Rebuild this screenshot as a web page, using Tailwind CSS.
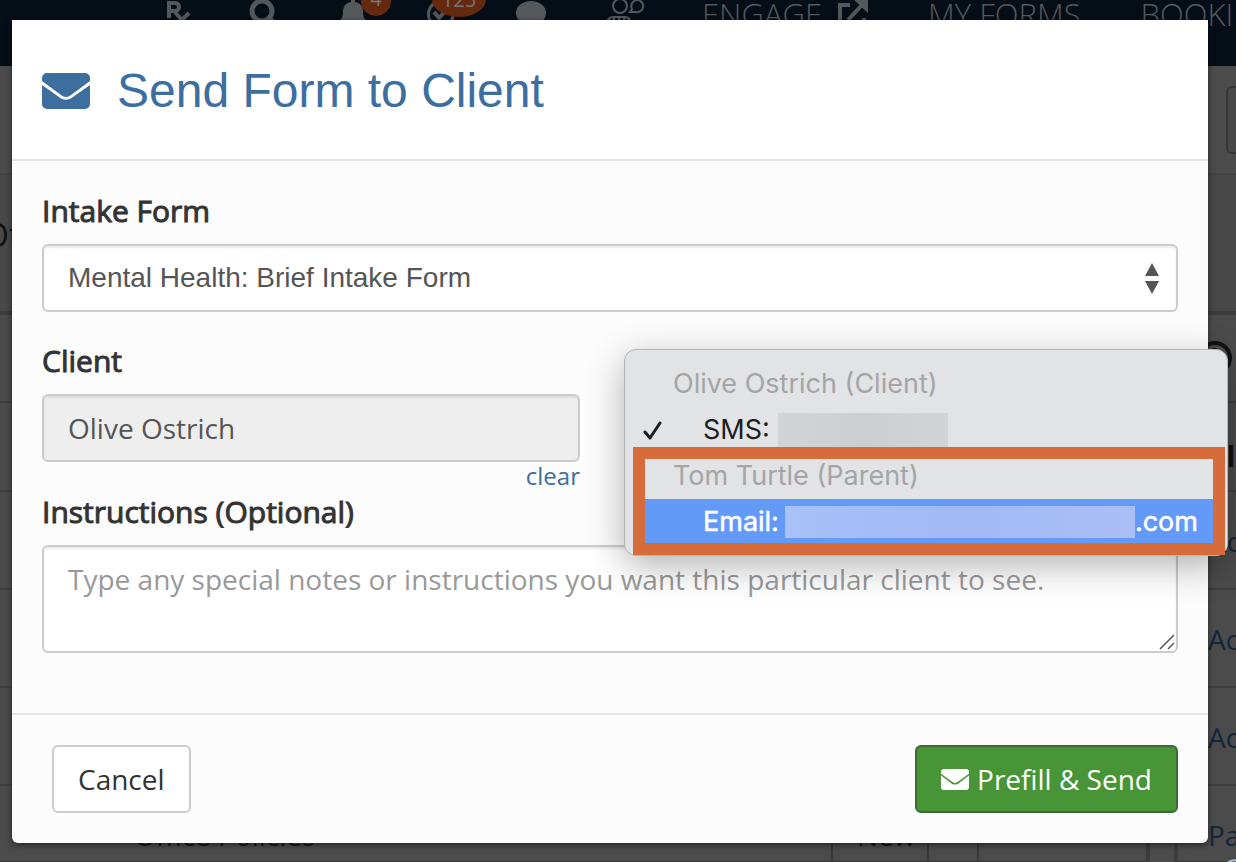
<!DOCTYPE html>
<html lang="en">
<head>
  <meta charset="UTF-8">
  <title>Send Form to Client</title>
  <script src="https://cdn.jsdelivr.net/npm/@tailwindcss/browser@4"></script>
</head>
<body class="relative h-screen overflow-hidden bg-[#4b4b4b] font-['Open_Sans',sans-serif] text-[28px]">

  <!-- dimmed page behind the dialog -->
  <div aria-hidden="true">
    <nav class="flex h-[66px] items-start overflow-hidden bg-[#050e17] pl-[166px] text-[31px] leading-7 font-light whitespace-nowrap text-[#55585b]">
      <svg class="h-7 w-6 shrink-0" viewBox="0 0 24 28" fill="none" stroke="currentColor" stroke-width="4"><path d="M3 18V3h6a4 4 0 0 1 0 8H3M8 11l13 15M23 13L10 26"/></svg>
      <svg class="ml-[59px] h-7 w-8 shrink-0" viewBox="0 0 32 28" fill="none" stroke="currentColor" stroke-width="5"><circle cx="13" cy="11" r="10"/><path d="M20 18l8 8"/></svg>
      <div class="relative ml-[58px] shrink-0">
        <svg class="h-7 w-8" viewBox="0 0 32 28" fill="currentColor"><path d="M12 0h4v2c6 1 8 5 8 10 0 4 1 6 3 9H1c2-3 3-5 3-9 0-5 2-9 8-10z"/></svg>
        <span class="absolute -top-[14px] left-[22px] flex size-[30px] items-center justify-center rounded-full bg-[#652910] pb-1 text-xl font-normal text-[#777]">4</span>
      </div>
      <div class="relative ml-[54px] shrink-0">
        <svg class="h-7 w-8" viewBox="0 0 32 28" fill="none" stroke="currentColor" stroke-width="3"><path d="M10 3a13 13 0 0 0-4 19M28 16a13 13 0 0 1-4 8"/><path d="M9 12l5 6 9-10" stroke-width="4"/></svg>
        <span class="absolute -top-[18px] left-[7px] flex h-[35px] w-[54px] items-center justify-center rounded-[50%] bg-[#652910] text-xl font-normal text-[#777]">125</span>
      </div>
      <svg class="ml-[59px] h-7 w-8 shrink-0" viewBox="0 0 32 28" fill="currentColor"><ellipse cx="15" cy="13" rx="15" ry="12"/></svg>
      <svg class="ml-[58px] h-7 w-10 shrink-0" viewBox="0 0 40 28" fill="none" stroke="currentColor" stroke-width="2"><circle cx="14" cy="6" r="7"/><path d="M24 12l2-3a6 6 0 1 1 4 3zM1 24c0-5 3-7 7-7h10c4 0 7 2 7 7M8 17v4M18 17v4M13 18v3"/></svg>
      <span class="ml-[56px]">ENGAGE</span>
      <svg class="ml-[14px] h-7 w-9 shrink-0" viewBox="0 0 36 28" fill="none" stroke="currentColor" stroke-width="4"><path d="M14 5H4v22h24v-9M12 20L26 5"/><path d="M18 0h14v13z" fill="currentColor" stroke="none"/></svg>
      <span class="ml-[56px]">MY FORMS</span>
      <span class="ml-[60px]">BOOKINGS</span>
    </nav>
    <div class="flex h-[109px] justify-end border-b-2 border-[#434343] pt-5">
      <div class="h-[68px] w-[10px] rounded-l-md border-2 border-r-0 border-[#353535] bg-[#484848]"></div>
    </div>
    <div class="flex h-[140px] items-center border-b-4 border-[#3c3c3c] bg-[#484848] text-[32px] text-[#111]"><span class="-ml-4 -mt-4">Other</span></div>
    <div class="flex gap-6">
      <div class="flex-1 border-r-4 border-[#3d3d3d]">
        <div class="h-[88px] border-b-2 border-[#3f3f3f]"></div>
        <div class="h-[89px] border-b-2 border-[#3f3f3f]"></div>
        <div class="h-[98px] border-b-2 border-[#3f3f3f]"></div>
        <div class="h-[98px] border-b-2 border-[#3f3f3f]"></div>
        <div class="h-[98px] border-b-2 border-[#3f3f3f]"></div>
        <div class="flex h-[77px] border-b-2 border-[#383838] leading-[98px] font-medium text-[#151a15]">
          <div class="flex-1 border-r-2 border-[#393939] pl-[134px]">Office Policies</div>
          <div class="w-24 border-r-2 border-[#393939] pl-6">New</div>
          <div class="w-[50px] border-r-2 border-[#393939]"></div>
          <div class="w-[167px]"></div>
        </div>
      </div>
      <div class="w-[62px] overflow-hidden border-l-4 border-[#3d3d3d] whitespace-nowrap text-[#13263c]">
        <div class="h-[88px] border-b-2 border-[#3f3f3f] pt-6 pl-5">
          <svg class="size-9" viewBox="0 0 36 36" fill="none" stroke="#111" stroke-width="4"><circle cx="17" cy="19" r="15"/><path d="M17 9v10h7"/></svg>
        </div>
        <div class="h-[89px] border-b-2 border-[#3f3f3f] pl-[31px] leading-[106px] font-bold text-[#111]">Client</div>
        <div class="h-[98px] border-b-2 border-[#3f3f3f] pl-[31px] leading-[98px]">Ac</div>
        <div class="h-[98px] border-b-2 border-[#3f3f3f] pl-[30px] leading-[98px]">Active</div>
        <div class="h-[98px] border-b-2 border-[#3f3f3f] pl-[30px] leading-[98px]">Active</div>
        <div class="h-[77px] border-b-2 border-[#383838] pl-[30px] leading-[98px]">Past</div>
      </div>
    </div>
    <div class="absolute -right-4 -bottom-[29px] size-8 rounded-full border-2 border-[#a9b9d8] bg-[#3f6fc4]"></div>
  </div>

  <div role="dialog" aria-labelledby="dialogTitle" class="absolute top-5 right-7 left-3 rounded-b-md bg-[#fcfcfc] text-[#333] shadow-[0_2px_6px_rgba(0,0,0,0.5)]">
    <header class="flex items-center gap-[27px] border-b-2 border-[#e4e4e4] bg-white px-[30px] pt-[35px] pb-8 text-[#3c6e9f]">
      <svg class="h-9 w-12" viewBox="0 0 48 36" fill="currentColor"><path d="M5 0h38a5 5 0 0 1 5 5v3L29 22c-3 2.500-7 2.500-10 0L0 8V5a5 5 0 0 1 5-5z"/><path d="M0 12l17 12c4 3.500 10 3.500 14 0l17-12v19a5 5 0 0 1-5 5H5a5 5 0 0 1-5-5z"/></svg>
      <h1 id="dialogTitle" class="font-['Liberation_Sans',sans-serif] text-5xl leading-[72px]">Send Form to Client</h1>
    </header>

    <form>
      <div class="px-[30px] pt-[30px] pb-[60px]">
        <label for="intakeForm" class="mb-[13px] block text-[30px] leading-10 [-webkit-text-stroke:1px_#333]">Intake Form</label>
        <div class="relative">
          <select id="intakeForm" class="block h-[68px] w-full appearance-none rounded-md border-2 border-[#ccc] bg-white px-6 font-['Liberation_Sans',sans-serif] text-[#555] shadow-[inset_0_2px_2px_rgba(0,0,0,0.08)]">
            <option>Mental Health: Brief Intake Form</option>
          </select>
          <svg class="pointer-events-none absolute top-[18px] right-[18px] h-8 w-4" viewBox="0 0 16 32" fill="#555"><path d="M8 1l7 13H1zM1 19h14L8 32z"/></svg>
        </div>

        <div class="mt-[29px] grid grid-cols-2 gap-[60px]">
          <div>
            <label for="client" class="mb-[13px] block text-[30px] leading-10 [-webkit-text-stroke:1px_#333]">Client</label>
            <input id="client" type="text" value="Olive Ostrich" readonly class="block h-[68px] w-full rounded-md border-2 border-[#ccc] bg-[#eee] px-6 text-[#555] shadow-[inset_0_2px_2px_rgba(0,0,0,0.08)]">
            <div class="pb-[3px] text-right text-2xl leading-[27px]"><a href="#" class="text-[#3c6e9f]">clear</a></div>
          </div>

          <!-- open contact picker -->
          <div class="relative">
            <div role="listbox" aria-label="Send to" class="absolute top-2 -right-[50px] -left-4 z-10 rounded-xl border border-[#b5b5b5] bg-[#e2e3e5] pt-[11px] pb-[10px] font-[Inter,sans-serif] text-[27px] leading-[46px] shadow-[0_10px_36px_rgba(0,0,0,0.3)]">
              <div class="pl-12 text-[#a4a5a7]">Olive Ostrich (Client)</div>
              <div role="option" aria-selected="true" class="flex items-center pl-[18px] text-[#1d1d1f]">
                <svg class="mr-10 h-5 w-5" viewBox="0 0 20 20" fill="none" stroke="currentColor" stroke-width="3" stroke-linecap="round" stroke-linejoin="round"><path d="M2 12l5 6L17 3"/></svg>
                <span>SMS:</span>
                <span class="ml-2 h-[34px] w-[170px] bg-linear-to-r from-[#d3d4d6] via-[#cdced0] to-[#d3d4d6]"></span>
              </div>
              <div class="pl-12 text-[#a4a5a7]">Tom Turtle (Parent)</div>
              <div role="option" aria-selected="false" class="mr-[14px] ml-5 flex items-center bg-[#649af7] pl-[58px] text-white [-webkit-text-stroke:0.5px_#fff]">
                <span>Email:</span>
                <span class="ml-[6px] h-8 w-[350px] bg-linear-to-r from-[#a8c1f8] via-[#a2b9f5] to-[#abbff6]"></span>
                <span>.com</span>
              </div>
              <div class="pointer-events-none absolute right-[2px] bottom-0 left-2 h-[108px] border-12 border-[#d66b3b]"></div>
            </div>
          </div>
        </div>

        <label for="instructions" class="mb-[13px] block text-[30px] leading-10 [-webkit-text-stroke:1px_#333]">Instructions (Optional)</label>
        <div class="relative">
          <textarea id="instructions" placeholder="Type any special notes or instructions you want this particular client to see." class="block h-[108px] w-full resize-none rounded-md border-2 border-[#ccc] bg-white px-6 py-3 leading-10 text-[#555] shadow-[inset_0_2px_2px_rgba(0,0,0,0.08)] placeholder:text-[#999]"></textarea>
          <svg class="pointer-events-none absolute right-[3px] bottom-[3px] size-4" viewBox="0 0 16 16" fill="none" stroke="#555" stroke-width="1.500"><path d="M1 15L15 1M9 15l6-6"/></svg>
        </div>
      </div>

      <footer class="flex items-center justify-between border-t-2 border-[#e4e4e4] py-[30px] pr-[30px] pl-10">
        <button type="button" class="h-[68px] rounded-md border-2 border-[#ccc] bg-white px-6">Cancel</button>
        <button type="submit" class="flex h-[68px] items-center gap-2 rounded-md border-2 border-[#396b33] bg-[#479536] px-6 text-white">
          <svg class="h-[21px] w-7" viewBox="0 0 48 36" fill="currentColor"><path d="M5 0h38a5 5 0 0 1 5 5v3L29 22c-3 2.500-7 2.500-10 0L0 8V5a5 5 0 0 1 5-5z"/><path d="M0 11l17 13c4 3.500 10 3.500 14 0l17-13v20a5 5 0 0 1-5 5H5a5 5 0 0 1-5-5z"/></svg>
          Prefill &amp; Send
        </button>
      </footer>
    </form>
  </div>
</body>
</html>
